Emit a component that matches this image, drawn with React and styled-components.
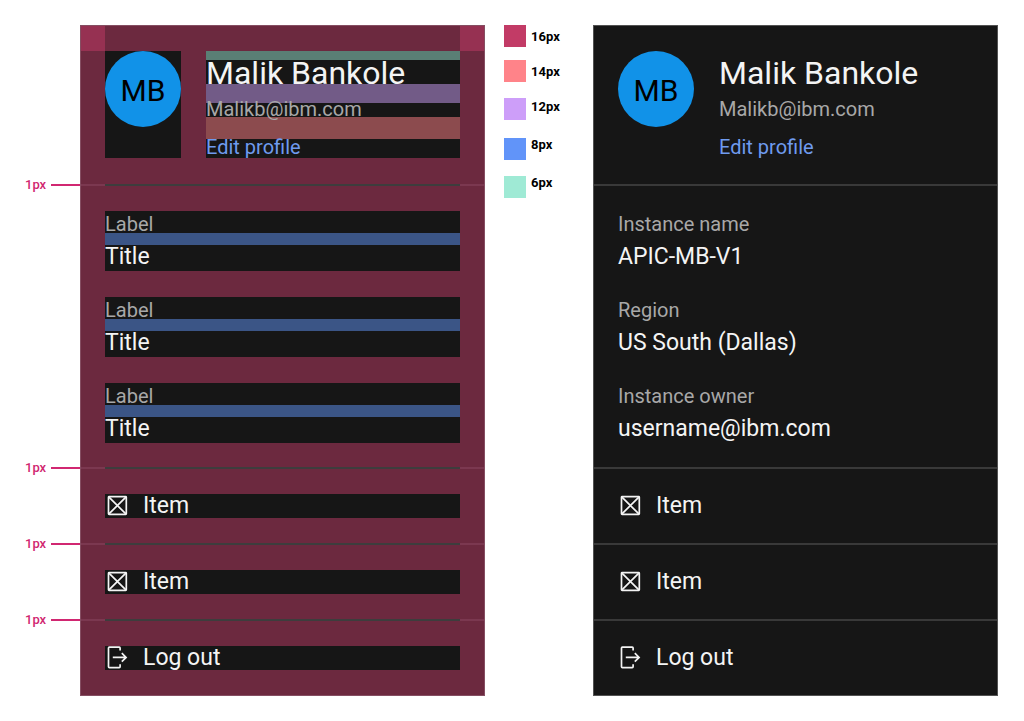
import React from "react";
import styled, { createGlobalStyle } from "styled-components";

const GlobalStyle = createGlobalStyle`
  *, *::before, *::after { box-sizing: border-box; }
  body { margin: 0; background: #ffffff; font-family: Roboto, "Noto Sans", sans-serif; }
`;

const Page = styled.main`
  display: grid;
  grid-template-columns: 55px minmax(0, 405fr) 108px minmax(0, 405fr);
  align-items: start;
  padding: 25px 26px 25px 25px;
`;

const Rail = styled.aside`
  display: flex;
  flex-direction: column;
`;

const RailMark = styled.div`
  display: flex;
  align-items: center;
  gap: 5px;
  height: 14px;
  margin-top: ${(p) => p.$space}px;
  color: #d12771;
  font-size: 13px;
  font-weight: 500;
  line-height: 14px;

  &::after {
    content: "";
    flex: 1;
    height: 2px;
    background: #d12771;
  }
`;

const Card = styled.section`
  border: 1px solid ${(p) => (p.$spec ? "#854e62" : "#525252")};
  background: ${(p) => (p.$spec ? "#6c293f" : "#161616")};
  color: #f4f4f4;
`;

const Corners = styled.div`
  display: flex;
  justify-content: space-between;
  height: 25px;

  &::before, &::after {
    content: "";
    width: 24px;
    background: ${(p) => (p.$spec ? "#963152" : "transparent")};
  }
`;

const Header = styled.header`
  display: flex;
  gap: 25px;
  padding: 0 24px 26px;
`;

const AvatarColumn = styled.div`
  flex: none;
  width: 76px;
  background: #161616;
`;

const Avatar = styled.div`
  display: grid;
  place-items: center;
  height: 76px;
  padding-top: 4px;
  border-radius: 50%;
  background: #1192e8;
  color: #000000;
  font-size: 30px;
  font-weight: 400;
  line-height: 36px;
`;

const Identity = styled.div`
  flex: 1;
  min-width: 0;
  background: #161616;
`;

const bandColors = {
  teal: "#5a7f75",
  purple: "#725b87",
  red: "#8c4b4e",
  blue: "#3b5586",
};

const Band = styled.div`
  height: ${(p) => p.$size}px;
  background: ${(p) => (p.$spec ? bandColors[p.$tone] : "transparent")};
`;

const Name = styled.h2`
  height: 24px;
  margin: 0;
  font-size: 32px;
  font-weight: 400;
  line-height: 26px;
  white-space: nowrap;
`;

const Email = styled.p`
  height: 14px;
  margin: 0;
  color: #a8a8a8;
  font-size: 20px;
  line-height: 12px;
`;

const EditLink = styled.a`
  display: block;
  height: 19px;
  color: #6f9bef;
  font-size: 20px;
  line-height: 16px;
  text-decoration: none;
`;

const Divider = styled.hr`
  height: 2px;
  margin: 0;
  border: 0;
  background: ${(p) =>
    p.$spec
      ? "linear-gradient(to right, #7b3850 24px, #3d3d3d 24px calc(100% - 24px), #7b3850 calc(100% - 24px))"
      : "#393939"};
`;

const Fields = styled.dl`
  display: grid;
  gap: 26px;
  margin: 0;
  padding: 25px 24px 24px;
`;

const FieldBox = styled.div`
  background: #161616;
`;

const FieldLabel = styled.dt`
  height: 22px;
  color: #a8a8a8;
  font-size: 20px;
  line-height: 26px;
`;

const FieldValue = styled.dd`
  height: 38px;
  margin: 0;
  border-top: 12px solid ${(p) => (p.$spec ? bandColors.blue : "transparent")};
  font-size: 23px;
  line-height: 24px;
`;

const ItemRow = styled.div`
  padding: 25px 24px;
`;

const ItemButton = styled.button`
  display: flex;
  align-items: center;
  gap: 13px;
  width: 100%;
  height: 24px;
  padding: 0;
  border: 0;
  background: #161616;
  color: #f4f4f4;
  font-family: inherit;
  font-size: 23px;
  line-height: 24px;
  text-align: left;

  svg { flex: none; }
`;

const Legend = styled.ul`
  margin: 0;
  padding: 0 0 0 19px;
  list-style: none;
`;

const LegendItem = styled.li`
  display: flex;
  gap: 5px;
  height: 22px;
  margin-top: ${(p) => p.$space}px;
  color: #000000;
  font-size: 13px;
  font-weight: 700;
  line-height: ${(p) => p.$line}px;

  &::before {
    content: "";
    width: 22px;
    height: 22px;
    background: ${(p) => p.$color};
  }
`;

const BoxIcon = () => (
  <svg width="25" height="24" viewBox="0 0 25 24" fill="none" stroke="#f4f4f4" strokeWidth="1.7" aria-hidden="true">
    <rect x="3.5" y="2.6" width="17.8" height="17.8" rx="0.6" />
    <path d="M3.7 2.8 21.1 20.2M21.1 2.8 3.7 20.2" />
  </svg>
);

const LogoutIcon = () => (
  <svg width="25" height="24" viewBox="0 0 25 24" fill="none" stroke="#f4f4f4" strokeWidth="1.7" aria-hidden="true">
    <path d="M15.1 4.6V2.1Q15.1 1.2 14.2 1.2H4.4Q3.5 1.2 3.5 2.1V20.7Q3.5 21.6 4.4 21.6H14.2Q15.1 21.6 15.1 20.7V18.2" />
    <path d="M7.8 11.4H21M16.8 7.1 21.1 11.4 16.8 15.7" />
  </svg>
);

function ProfileCard({ spec, fields, items }) {
  return (
    <Card $spec={spec}>
      <Corners $spec={spec} />
      <Header>
        <AvatarColumn>
          <Avatar>MB</Avatar>
        </AvatarColumn>
        <Identity>
          <Band $size={9} $tone="teal" $spec={spec} />
          <Name>Malik Bankole</Name>
          <Band $size={19} $tone="purple" $spec={spec} />
          <Email>Malikb@ibm.com</Email>
          <Band $size={22} $tone="red" $spec={spec} />
          <EditLink href="#profile">Edit profile</EditLink>
        </Identity>
      </Header>
      <Divider $spec={spec} />
      <Fields>
        {fields.map(([label, value], i) => (
          <FieldBox key={i}>
            <FieldLabel>{label}</FieldLabel>
            <FieldValue $spec={spec}>{value}</FieldValue>
          </FieldBox>
        ))}
      </Fields>
      {items.map(([label, Icon], i) => (
        <React.Fragment key={i}>
          <Divider $spec={spec} />
          <ItemRow>
            <ItemButton type="button">
              <Icon />
              {label}
            </ItemButton>
          </ItemRow>
        </React.Fragment>
      ))}
    </Card>
  );
}

const items = [
  ["Item", BoxIcon],
  ["Item", BoxIcon],
  ["Log out", LogoutIcon],
];

const specFields = [
  ["Label", "Title"],
  ["Label", "Title"],
  ["Label", "Title"],
];

const accountFields = [
  ["Instance name", "APIC-MB-V1"],
  ["Region", "US South (Dallas)"],
  ["Instance owner", "username@ibm.com"],
];

const legend = [
  { label: "16px", color: "#c23b66", space: 0, line: 24 },
  { label: "14px", color: "#ff8389", space: 13, line: 24 },
  { label: "12px", color: "#cd9ef9", space: 16, line: 18 },
  { label: "8px", color: "#6194f9", space: 18, line: 14 },
  { label: "6px", color: "#9fead5", space: 16, line: 14 },
];

export default function App() {
  return (
    <>
      <GlobalStyle />
      <Page>
        <Rail>
          <RailMark $space={153}>1px</RailMark>
          <RailMark $space={269}>1px</RailMark>
          <RailMark $space={62}>1px</RailMark>
          <RailMark $space={62}>1px</RailMark>
        </Rail>
        <ProfileCard spec fields={specFields} items={items} />
        <Legend>
          {legend.map(({ label, color, space, line }) => (
            <LegendItem key={label} $color={color} $space={space} $line={line}>
              {label}
            </LegendItem>
          ))}
        </Legend>
        <ProfileCard fields={accountFields} items={items} />
      </Page>
    </>
  );
}
